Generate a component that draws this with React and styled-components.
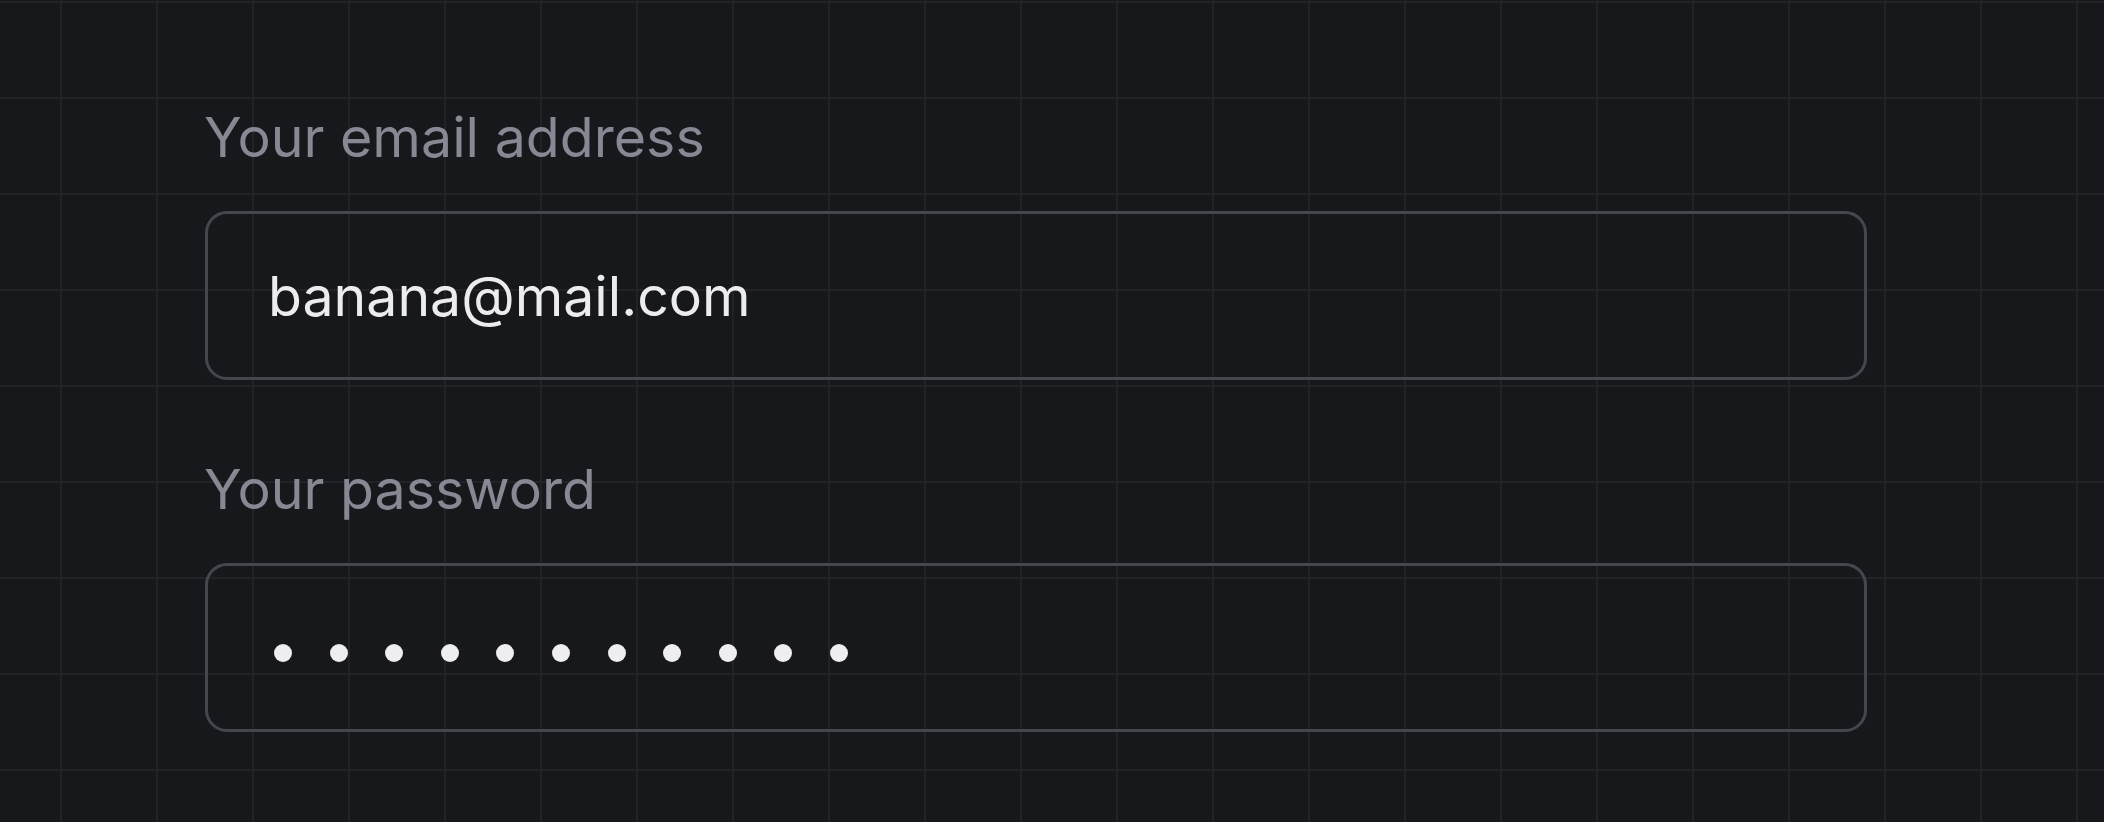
import React from "react";
import styled, { createGlobalStyle } from "styled-components";

const GlobalStyle = createGlobalStyle`
  html, body {
    margin: 0;
    padding: 0;
    background: #17181b;
  }
  body {
    font-family: Inter, "Noto Sans", "Liberation Sans", sans-serif;
  }
`;

const Canvas = styled.main`
  box-sizing: border-box;
  width: 100%;
  min-height: 100vh;
  padding: 103px 0 0 204px;
  background-color: #17181b;
  background-image:
    linear-gradient(to right, #222327 0 2px, transparent 2px),
    linear-gradient(to bottom, #222327 0 2px, transparent 2px);
  background-size: 96px 96px;
  background-position: 60px 1px;
`;

const Form = styled.form`
  display: flex;
  flex-direction: column;
  gap: 75px;
  width: 1663px;
`;

const FieldGroup = styled.div`
  display: flex;
  flex-direction: column;
  gap: 40px;
`;

const Label = styled.label`
  font-size: 55.5px;
  line-height: 68px;
  font-weight: 400;
  color: #878893;
`;

const Field = styled.div`
  box-sizing: border-box;
  height: 169px;
  margin-left: 1px;
  border: 3px solid #46474e;
  border-radius: 22px;
  display: flex;
  align-items: center;
  padding: ${(p) => (p.$secret ? "10px 0 0 66px" : "0 0 0 60px")};
`;

const Value = styled.span`
  font-size: 55.4px;
  line-height: 68px;
  color: #ececef;
`;

const Dots = styled.span`
  display: flex;
  align-items: center;
  gap: 37.6px;
`;

const Dot = styled.span`
  width: 18px;
  height: 18px;
  border-radius: 50%;
  background: #eeeef0;
`;

export default function App() {
  return (
    <>
      <GlobalStyle />
      <Canvas>
        <Form onSubmit={(e) => e.preventDefault()}>
          <FieldGroup>
            <Label>Your email address</Label>
            <Field>
              <Value>banana@mail.com</Value>
            </Field>
          </FieldGroup>
          <FieldGroup>
            <Label>Your password</Label>
            <Field $secret aria-label="password">
              <Dots>
                {Array.from({ length: 11 }).map((_, i) => (
                  <Dot key={i} />
                ))}
              </Dots>
            </Field>
          </FieldGroup>
        </Form>
      </Canvas>
    </>
  );
}
